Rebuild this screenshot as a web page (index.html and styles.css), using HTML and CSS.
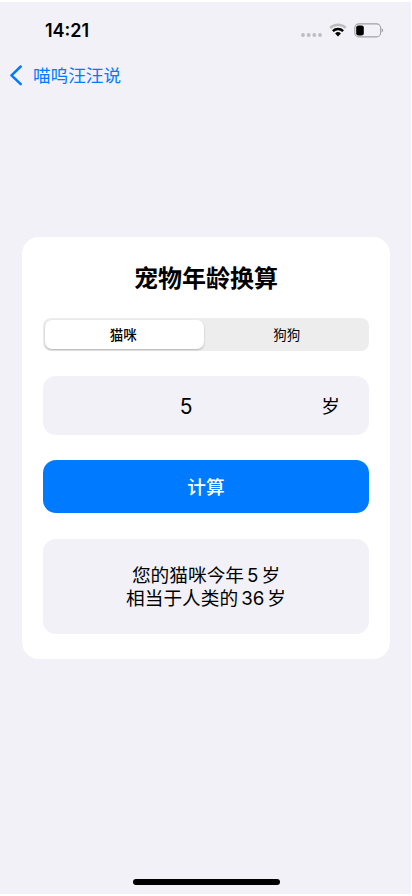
FILE: index.html
```html
<!DOCTYPE html>
<html lang="zh-CN">
  <head>
    <meta charset="utf-8" />
    <meta name="viewport" content="width=device-width, initial-scale=1" />
    <title>宠物年龄换算</title>
    <link rel="stylesheet" href="styles.css">
  </head>
  <body>
    <div class="screen">
      <!-- 状态栏 -->
      <header class="status-bar">
        <span class="time">14:21</span>
        <div class="status-icons">
          <svg class="signal" width="21" height="4" viewBox="0 0 21 4">
            <circle cx="2" cy="2" r="1.9" />
            <circle cx="7.7" cy="2" r="1.9" />
            <circle cx="13.3" cy="2" r="1.9" />
            <circle cx="19" cy="2" r="1.9" />
          </svg>
          <svg class="wifi" width="18" height="14" viewBox="0 0 18 14" fill="none">
            <path d="M1.2 4.8a11.2 11.2 0 0 1 15.6 0" stroke="#bdbdc1" stroke-width="2.5" />
            <path d="M3.9 8.1a7.2 7.2 0 0 1 10.2 0" stroke="#000" stroke-width="2.5" />
            <path d="M9 13.4L6.1 10.5a4.1 4.1 0 0 1 5.8 0z" fill="#000" />
          </svg>
          <svg class="battery" width="30" height="15" viewBox="0 0 30 15">
            <rect x="0.8" y="0.9" width="25.8" height="13" rx="4" fill="none" stroke="#a3a3a7" stroke-width="1.1" />
            <rect x="2.2" y="2.4" width="7.6" height="10" rx="2.2" fill="#000" />
            <path d="M27.6 5.3c2 .7 2 3.5 0 4.2z" fill="#a3a3a7" />
          </svg>
        </div>
      </header>

      <!-- 返回 -->
      <nav class="nav-bar">
        <a class="back" href="#">
          <svg width="13" height="21" viewBox="0 0 13 21" fill="none">
            <path d="M11.7 1.5L2.5 10.3l9.2 8.8" stroke="#007aff" stroke-width="2.5" stroke-linecap="round" stroke-linejoin="round" />
          </svg>
          <span>喵呜汪汪说</span>
        </a>
      </nav>

      <main class="card">
        <h1 class="title">宠物年龄换算</h1>
        <div class="segmented">
          <button class="segment active" type="button">猫咪</button>
          <button class="segment" type="button">狗狗</button>
        </div>
        <label class="age-field">
          <input class="age-input" type="text" value="5" />
          <span class="unit">岁</span>
        </label>
        <button class="submit" type="button">计算</button>
        <div class="result">
          <p>您的猫咪今年<span class="num">5</span>岁</p>
          <p>相当于人类的<span class="num">36</span>岁</p>
        </div>
      </main>

      <div class="home-indicator"></div>
    </div>
  </body>
</html>
```
FILE: styles.css
```css
* {
  box-sizing: border-box;
}
body {
  margin: 0;
  background: #fff;
  color: #000;
  font-family: Inter, "Noto Sans CJK SC", sans-serif;
}
button,
input {
  margin: 0;
  padding: 0;
  border: 0;
  background: none;
  color: inherit;
  font: inherit;
}
.screen {
  display: flex;
  flex-direction: column;
  height: 892px;
  margin: 2px 1px 2px 0;
  background: #f2f1f7;
}
.status-bar {
  display: flex;
  justify-content: space-between;
  align-items: center;
  height: 56px;
  padding: 0 27px 0 45px;
}
.time {
  font-size: 18px;
  font-weight: 600;
}
.status-icons {
  display: flex;
  align-items: center;
}
.signal {
  margin: 9px 7px 0 0;
  fill: #bdbdc1;
}
.wifi {
  margin-right: 7px;
}
.nav-bar {
  height: 34px;
  padding-left: 9px;
}
.back {
  display: flex;
  align-items: center;
  gap: 11px;
  height: 34px;
  color: #007aff;
  font-size: 17.6px;
  text-decoration: none;
}
.back span {
  padding-bottom: 1px;
}
.card {
  height: 422px;
  margin: 145px 21px 0 22px;
  padding: 21px;
  border-radius: 17px;
  background: #fff;
}
.title {
  height: 42px;
  margin: 0 0 18px;
  font-size: 24px;
  font-weight: 700;
  line-height: 42px;
  text-align: center;
}
.segmented {
  display: flex;
  gap: 5px;
  height: 33px;
  padding: 2px;
  border-radius: 8px;
  background: #ededed;
}
.segment {
  flex: 1;
  padding: 0 2px 2px 0;
  border-radius: 7px;
  font-size: 13.5px;
}
.segment.active {
  background: #fff;
  box-shadow: 0 1px 2px rgba(0, 0, 0, 0.25);
  font-weight: 500;
}
.age-field {
  display: flex;
  align-items: center;
  height: 59px;
  margin-top: 25px;
  padding: 0 29px 0 8px;
  border-radius: 13px;
  background: #f2f1f7;
  font-size: 18.7px;
}
.age-input {
  flex: 1;
  min-width: 0;
  padding-top: 2px;
  font-size: 21px;
  text-align: center;
}
.unit {
  padding-bottom: 2px;
}
.submit {
  display: block;
  width: 100%;
  height: 53px;
  margin-top: 25px;
  padding-bottom: 2px;
  border-radius: 13px;
  background: #007aff;
  color: #fff;
  font-size: 18.7px;
  font-weight: 500;
}
.result {
  height: 95px;
  margin-top: 25.5px;
  padding-top: 26.5px;
  border-radius: 13px;
  background: #f2f1f7;
  font-size: 18.7px;
  line-height: 22.5px;
  text-align: center;
}
.result p {
  margin: 0;
}
.num {
  margin: 0 3px;
}
.home-indicator {
  width: 147px;
  height: 6px;
  margin: auto auto 9px 133px;
  border-radius: 3px;
  background: #000;
}
```
